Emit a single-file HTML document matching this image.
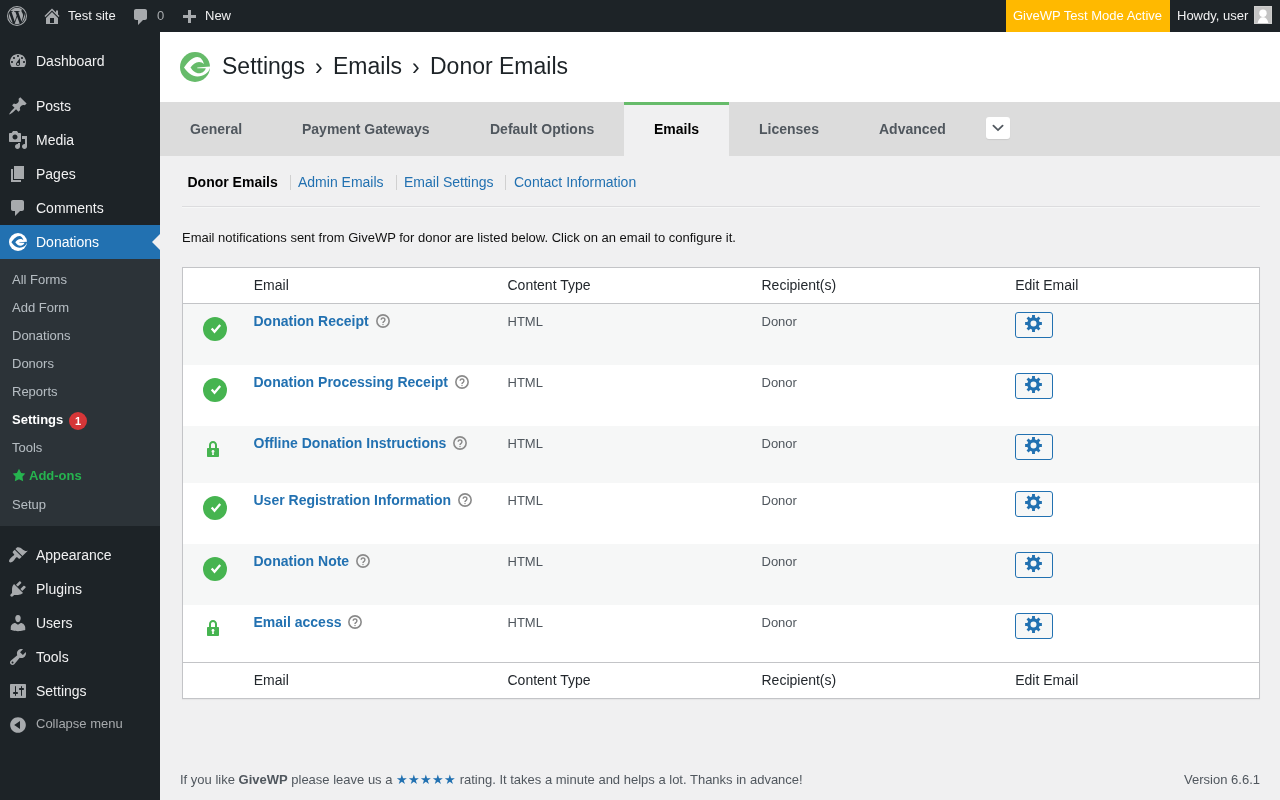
<!DOCTYPE html>
<html><head><meta charset="utf-8">
<style>
*{box-sizing:border-box;margin:0;padding:0}
html,body{width:1280px;height:800px;overflow:hidden}
body{will-change:transform;background:#f0f0f1;font-family:"Liberation Sans",sans-serif;font-size:13px;color:#3c434a;position:relative}
.abs{position:absolute}
.tx{position:absolute;line-height:1;white-space:nowrap}
#adminbar{position:absolute;left:0;top:0;width:1280px;height:32px;background:#1d2327}
#side{position:absolute;left:0;top:32px;width:160px;height:768px;background:#1d2327}
</style></head>
<body>
<div id="adminbar">
<svg class="abs" style="left:7px;top:6px" width="20" height="20" viewBox="0 0 24 24"><defs><clipPath id="wpc"><circle cx="12" cy="12" r="9.8"/></clipPath></defs><circle cx="12" cy="12" r="11.35" fill="none" stroke="#a7aaad" stroke-width="1.3"/><path d="M21.469 6.825c.84 1.537 1.318 3.3 1.318 5.175 0 3.979-2.156 7.456-5.363 9.325l3.295-9.527c.615-1.54.82-2.771.82-3.864 0-.405-.026-.78-.07-1.11m-7.981.105c.647-.03 1.232-.105 1.232-.105.582-.075.514-.93-.067-.899 0 0-1.755.135-2.880.135-1.064 0-2.85-.15-2.85-.15-.585-.03-.661.855-.075.885 0 0 .54.061 1.125.09l1.68 4.605-2.37 7.08L5.354 6.9c.649-.03 1.234-.1 1.234-.1.585-.075.516-.93-.065-.896 0 0-1.746.138-2.874.138-.2 0-.438-.008-.69-.015C4.911 3.15 8.235 1.215 12 1.215c2.809 0 5.365 1.072 7.286 2.833-.046-.003-.091-.009-.141-.009-1.06 0-1.812.923-1.812 1.914 0 .89.513 1.643 1.06 2.531.411.72.89 1.643.89 2.977 0 .915-.354 1.994-.821 3.479l-1.075 3.585-3.9-11.61.001.014zM12 22.784c-1.059 0-2.081-.153-3.048-.437l3.237-9.406 3.315 9.087c.024.053.05.101.078.149-1.12.393-2.325.609-3.582.609M1.211 12c0-1.564.336-3.05.935-4.39L7.290 21.709C3.694 19.960 1.212 16.271 1.211 12" fill="#a7aaad" clip-path="url(#wpc)"/></svg>
<svg class="abs" style="left:42px;top:6px" width="20" height="20" viewBox="0 0 20 20"><path d="M16 8.5l1.53 1.53-1.06 1.06L10 4.62l-6.47 6.47-1.06-1.06L10 2.5l4 4v-2h2v4zm-6-2.46l6 5.99V18H4v-5.97zM12 17v-5H8v5h4z" fill="#a7aaad"/></svg>
<span class="tx" style="left:68px;top:9px;font-size:13px;font-weight:400;color:#f0f0f1;">Test site</span>
<svg class="abs" style="left:131px;top:7px" width="20" height="20" viewBox="0 0 20 20"><path d="M5 2h9c1.1 0 2 .9 2 2v7c0 1.1-.9 2-2 2h-2l-5 5v-5H5c-1.1 0-2-.9-2-2V4c0-1.1.9-2 2-2z" fill="#a7aaad"/></svg>
<span class="tx" style="left:157px;top:9px;font-size:13px;font-weight:400;color:#a7aaad;">0</span>
<svg class="abs" style="left:179px;top:8px" width="20" height="20" viewBox="0 0 20 20"><path d="M17 7v3h-5v5H9v-5H4V7h5V2h3v5h5z" fill="#a7aaad"/></svg>
<span class="tx" style="left:205px;top:9px;font-size:13px;font-weight:400;color:#f0f0f1;">New</span>
<div class="abs" style="left:1006px;top:0;width:164px;height:32px;background:#ffb900"></div>
<span class="tx" style="left:1013px;top:9px;font-size:13px;font-weight:400;color:#fff;">GiveWP Test Mode Active</span>
<span class="tx" style="left:1177px;top:9px;font-size:13px;font-weight:400;color:#f0f0f1;">Howdy, user</span>
<div class="abs" style="left:1254px;top:6px;width:18px;height:18px;background:#c4c4c4;border:1px solid #cdcdcd;overflow:hidden"><svg width="16" height="16" viewBox="0 0 16 16" style="display:block"><circle cx="8" cy="6.2" r="3.7" fill="#fff"/><path d="M2.6 16C3.2 12.4 5.3 10.6 7 10.2L9 10.2C10.7 10.6 12.8 12.4 13.4 16Z" fill="#fff"/></svg></div>
</div>
<div id="side"></div>
<svg class="abs" style="left:8px;top:51px" width="20" height="20" viewBox="0 0 20 20"><path d="M3.76 16h12.48c1.1-1.37 1.76-3.11 1.76-5 0-4.42-3.58-8-8-8s-8 3.58-8 8c0 1.89.66 3.630 1.76 5zM10 4c.55 0 1 .45 1 1s-.45 1-1 1-1-.45-1-1 .45-1 1-1zM6 6c.55 0 1 .45 1 1s-.45 1-1 1-1-.45-1-1 .45-1 1-1zm8 0c.55 0 1 .45 1 1s-.45 1-1 1-1-.45-1-1 .45-1 1-1zm-5.37 5.55L12 7v6c0 1.1-.9 2-2 2s-2-.9-2-2c0-.57.24-1.08.63-1.45zM4 10c.55 0 1 .45 1 1s-.45 1-1 1-1-.45-1-1 .45-1 1-1zm12 0c.55 0 1 .45 1 1s-.45 1-1 1-1-.45-1-1 .45-1 1-1zm-5 3c0-.55-.45-1-1-1s-1 .45-1 1 .45 1 1 1 1-.45 1-1z" fill="#a7aaad"/></svg>
<span class="tx" style="left:36px;top:54px;font-size:14px;font-weight:400;color:#f0f0f1;">Dashboard</span>
<svg class="abs" style="left:8px;top:96px" width="20" height="20" viewBox="0 0 20 20"><path d="M10.44 3.02l1.82-1.82 6.36 6.35-1.83 1.82c-1.05-.68-2.48-.57-3.41.36l-.75.75c-.92.93-1.04 2.35-.35 3.41l-1.83 1.82-2.410-2.41-2.8 2.79c-.42.42-3.38 2.71-3.8 2.29s1.86-3.39 2.28-3.81l2.79-2.79L4.1 9.36l1.83-1.82c1.05.69 2.48.57 3.4-.36l.75-.75c.93-.92 1.05-2.35.36-3.41z" fill="#a7aaad"/></svg>
<span class="tx" style="left:36px;top:99px;font-size:14px;font-weight:400;color:#f0f0f1;">Posts</span>
<svg class="abs" style="left:8px;top:130px" width="20" height="20" viewBox="0 0 20 20"><path d="M13 11V4c0-.55-.45-1-1-1h-1.67L9 1H5L3.67 3H2c-.55 0-1 .45-1 1v7c0 .55.45 1 1 1h10c.55 0 1-.45 1-1zM7 4.5c1.38 0 2.5 1.12 2.5 2.5S8.38 9.5 7 9.5 4.5 8.38 4.5 7 5.62 4.5 7 4.5zM14 6h5v10.5c0 1.38-1.12 2.5-2.5 2.5S14 17.88 14 16.5s1.12-2.5 2.5-2.5c.17 0 .34.02.5.05V9h-3V6zm-4 8.05V13h2v3.5c0 1.38-1.12 2.5-2.5 2.5S7 17.88 7 16.5s1.12-2.5 2.5-2.5c.17 0 .34.02.5.05z" fill="#a7aaad"/></svg>
<span class="tx" style="left:36px;top:133px;font-size:14px;font-weight:400;color:#f0f0f1;">Media</span>
<svg class="abs" style="left:8px;top:164px" width="20" height="20" viewBox="0 0 20 20"><path d="M6 15V2h10v13H6zm-1 1h8v2H3V5h2v11z" fill="#a7aaad"/></svg>
<span class="tx" style="left:36px;top:167px;font-size:14px;font-weight:400;color:#f0f0f1;">Pages</span>
<svg class="abs" style="left:8px;top:198px" width="20" height="20" viewBox="0 0 20 20"><path d="M5 2h9c1.1 0 2 .9 2 2v7c0 1.1-.9 2-2 2h-2l-5 5v-5H5c-1.1 0-2-.9-2-2V4c0-1.1.9-2 2-2z" fill="#a7aaad"/></svg>
<span class="tx" style="left:36px;top:201px;font-size:14px;font-weight:400;color:#f0f0f1;">Comments</span>
<div class="abs" style="left:0;top:225px;width:160px;height:34px;background:#2271b1"></div>
<svg class="abs" style="left:152px;top:234px" width="8" height="16" viewBox="0 0 8 16"><path d="M8 0L0 8L8 16Z" fill="#f0f0f1"/></svg>
<svg class="abs" style="left:9px;top:233px" width="18" height="18" viewBox="0 0 30 30"><circle cx="15" cy="15" r="15" fill="#fff"/><path d="M4 15.5C8 10 12 5.2 17.3 5.1C20.5 5.1 22.8 8 24 11.9C22.5 10.8 21 10 19 10C15.5 10 12.5 12.5 10.5 15.5C12.5 18.5 15.5 21.3 19 21.3C22.5 21.3 25 19 25.8 16.3L17.3 16.2L17.3 15.6L30 14.6L30 16C28.5 21 23.5 24.6 17.3 24.5C12 24.4 8 21 4 15.5Z" fill="#2271b1"/></svg>
<span class="tx" style="left:36px;top:235px;font-size:14px;font-weight:400;color:#fff;">Donations</span>
<div class="abs" style="left:0;top:259px;width:160px;height:267px;background:#2c3338"></div>
<span class="tx" style="left:12px;top:273px;font-size:13px;font-weight:400;color:rgba(240,246,252,.7);">All Forms</span>
<span class="tx" style="left:12px;top:301px;font-size:13px;font-weight:400;color:rgba(240,246,252,.7);">Add Form</span>
<span class="tx" style="left:12px;top:329px;font-size:13px;font-weight:400;color:rgba(240,246,252,.7);">Donations</span>
<span class="tx" style="left:12px;top:357px;font-size:13px;font-weight:400;color:rgba(240,246,252,.7);">Donors</span>
<span class="tx" style="left:12px;top:385px;font-size:13px;font-weight:400;color:rgba(240,246,252,.7);">Reports</span>
<span class="tx" style="left:12px;top:441px;font-size:13px;font-weight:400;color:rgba(240,246,252,.7);">Tools</span>
<span class="tx" style="left:12px;top:498px;font-size:13px;font-weight:400;color:rgba(240,246,252,.7);">Setup</span>
<span class="tx" style="left:12px;top:413px;font-size:13px;font-weight:700;color:#fff;">Settings</span>
<div class="abs" style="left:69px;top:412px;width:18px;height:18px;border-radius:9px;background:#d63638;color:#fff;font-size:11px;font-weight:bold;line-height:18px;text-align:center">1</div>
<svg class="abs" style="left:12px;top:468px" width="14" height="14" viewBox="0 0 20 20"><path d="M10 1l3 6 6 .75-4.12 4.62L16 19l-6-3-6 3 1.13-6.63L1 7.75 7 7z" fill="#26b44f"/></svg>
<span class="tx" style="left:29px;top:469px;font-size:13px;font-weight:700;color:#26b44f;">Add-ons</span>
<svg class="abs" style="left:8px;top:545px" width="20" height="20" viewBox="0 0 20 20"><path d="M14.48 11.06L7.41 3.99l1.5-1.5c.5-.56 2.3-.47 3.51.32 1.21.8 1.43 1.28 2.91 2.1 1.18.64 2.45 1.26 4.45.85zm-.71.71L6.7 4.7 4.93 6.47c-.39.39-.39 1.02 0 1.41l1.06 1.06c.39.39.39 1.03 0 1.42-.6.6-1.43 1.11-2.21 1.69-.35.26-.7.53-1.01.84C1.43 14.23.4 16.08 1.4 17.07c.99 1 2.84-.03 4.18-1.36.31-.31.58-.66.85-1.02.57-.78 1.08-1.61 1.69-2.21.39-.39 1.02-.39 1.41 0l1.06 1.06c.39.39 1.02.39 1.41 0z" fill="#a7aaad"/></svg>
<span class="tx" style="left:36px;top:548px;font-size:14px;font-weight:400;color:#f0f0f1;">Appearance</span>
<svg class="abs" style="left:8px;top:579px" width="20" height="20" viewBox="0 0 20 20"><path d="M13.11 4.36L9.87 7.6 8 5.73l3.24-3.24c.35-.34 1.050-.2 1.56.32.52.51.66 1.21.31 1.55zm-8 1.77l.91-1.12 9.01 9.01-1.19.84c-.71.71-2.63 1.16-3.82 1.16H6.14L4.9 17.26c-.59.59-1.54.59-2.12 0-.59-.58-.59-1.53 0-2.12l1.24-1.24v-3.88c0-1.13.4-3.19 1.09-3.89zm7.26 3.97l3.24-3.24c.34-.35 1.04-.21 1.55.31.52.51.66 1.21.31 1.55l-3.24 3.25z" fill="#a7aaad"/></svg>
<span class="tx" style="left:36px;top:582px;font-size:14px;font-weight:400;color:#f0f0f1;">Plugins</span>
<svg class="abs" style="left:8px;top:613px" width="20" height="20" viewBox="0 0 20 20"><path d="M10 9.25c-2.27 0-2.73-3.44-2.73-3.44C7 4.02 7.82 2 9.97 2c2.16 0 2.98 2.02 2.71 3.81 0 0-.41 3.44-2.68 3.44zm0 2.57L12.72 10c2.39 0 4.52 2.33 4.52 4.53v2.49s-3.65 1.13-7.24 1.13c-3.65 0-7.24-1.13-7.24-1.13v-2.49c0-2.25 1.94-4.48 4.47-4.48z" fill="#a7aaad"/></svg>
<span class="tx" style="left:36px;top:616px;font-size:14px;font-weight:400;color:#f0f0f1;">Users</span>
<svg class="abs" style="left:8px;top:647px" width="20" height="20" viewBox="0 0 20 20"><path d="M16.68 9.77c-1.34 1.34-3.3 1.67-4.95.99l-5.41 6.52c-.99.99-2.59.99-3.58 0s-.99-2.59 0-3.57l6.52-5.42c-.68-1.65-.35-3.61.99-4.95 1.28-1.28 3.12-1.62 4.72-1.06l-2.89 2.89 2.82 2.82 2.86-2.87c.53 1.58.18 3.39-1.08 4.65zM3.81 16.21c.4.39 1.04.39 1.43 0 .4-.4.4-1.04 0-1.43-.39-.4-1.03-.4-1.43 0-.39.39-.39 1.03 0 1.43z" fill="#a7aaad"/></svg>
<span class="tx" style="left:36px;top:650px;font-size:14px;font-weight:400;color:#f0f0f1;">Tools</span>
<svg class="abs" style="left:8px;top:681px" width="20" height="20" viewBox="0 0 20 20"><path d="M18 16V4c0-.55-.45-1-1-1H3c-.55 0-1 .45-1 1v12c0 .55.45 1 1 1h14c.55 0 1-.45 1-1zM8 11h1c.55 0 1 .45 1 1s-.45 1-1 1H8v1.5c0 .28-.22.5-.5.5s-.5-.22-.5-.5V13H6c-.55 0-1-.45-1-1s.45-1 1-1h1V5.5c0-.28.22-.5.5-.5s.5.22.5.5V11zm5-2h-1c-.55 0-1-.45-1-1s.45-1 1-1h1V5.5c0-.28.22-.5.5-.5s.5.22.5.5V7h1c.55 0 1 .45 1 1s-.45 1-1 1h-1v5.5c0 .28-.22.5-.5.5s-.5-.22-.5-.5V9z" fill="#a7aaad"/></svg>
<span class="tx" style="left:36px;top:684px;font-size:14px;font-weight:400;color:#f0f0f1;">Settings</span>
<svg class="abs" style="left:8px;top:715px" width="20" height="20" viewBox="0 0 20 20"><path d="M10 2.16c4.33 0 7.840 3.51 7.84 7.84S14.33 17.84 10 17.84 2.16 14.33 2.16 10 5.71 2.16 10 2.16zm2 11.72V6.12L6.18 9.97z" fill="#a7aaad"/></svg>
<span class="tx" style="left:36px;top:717px;font-size:13px;font-weight:400;color:#a7aaad;">Collapse menu</span>
<div class="abs" style="left:160px;top:32px;width:1120px;height:70px;background:#fff"></div>
<svg class="abs" style="left:180px;top:52px" width="30" height="30" viewBox="0 0 30 30"><circle cx="15" cy="15" r="15" fill="#66bb6a"/><path d="M4 15.5C8 10 12 5.2 17.3 5.1C20.5 5.1 22.8 8 24 11.9C22.5 10.8 21 10 19 10C15.5 10 12.5 12.5 10.5 15.5C12.5 18.5 15.5 21.3 19 21.3C22.5 21.3 25 19 25.8 16.3L17.3 16.2L17.3 15.6L30 14.6L30 16C28.5 21 23.5 24.6 17.3 24.5C12 24.4 8 21 4 15.5Z" fill="#fff"/></svg>
<span class="tx" style="left:222px;top:55px;font-size:23px;font-weight:400;color:#1d2327;">Settings</span>
<span class="tx" style="left:315px;top:56px;font-size:23px;font-weight:400;color:#1d2327;">›</span>
<span class="tx" style="left:333px;top:55px;font-size:23px;font-weight:400;color:#1d2327;">Emails</span>
<span class="tx" style="left:412px;top:56px;font-size:23px;font-weight:400;color:#1d2327;">›</span>
<span class="tx" style="left:430px;top:55px;font-size:23px;font-weight:400;color:#1d2327;">Donor Emails</span>
<div class="abs" style="left:160px;top:102px;width:1120px;height:54px;background:#dcdcdc"></div>
<div class="abs" style="left:624px;top:102px;width:105px;height:54px;background:#f0f0f1;border-top:3px solid #66bb6a"></div>
<span class="tx" style="left:190px;top:122px;font-size:14px;font-weight:700;color:#50575e;">General</span>
<span class="tx" style="left:302px;top:122px;font-size:14px;font-weight:700;color:#50575e;">Payment Gateways</span>
<span class="tx" style="left:490px;top:122px;font-size:14px;font-weight:700;color:#50575e;">Default Options</span>
<span class="tx" style="left:759px;top:122px;font-size:14px;font-weight:700;color:#50575e;">Licenses</span>
<span class="tx" style="left:879px;top:122px;font-size:14px;font-weight:700;color:#50575e;">Advanced</span>
<span class="tx" style="left:654px;top:122px;font-size:14px;font-weight:700;color:#000;">Emails</span>
<div class="abs" style="left:986px;top:117px;width:24px;height:22px;background:#fff;border-radius:3px;box-shadow:0 1px 1px rgba(0,0,0,.08)"><svg width="24" height="22" viewBox="0 0 24 22" style="display:block"><path d="M7.4 8.7L12 13.1L16.6 8.7" fill="none" stroke="#50575e" stroke-width="1.8" stroke-linecap="round"/></svg></div>
<span class="tx" style="left:187.5px;top:175px;font-size:14px;font-weight:700;color:#000;">Donor Emails</span>
<span class="tx" style="left:298px;top:175px;font-size:14px;font-weight:400;color:#2271b1;">Admin Emails</span>
<span class="tx" style="left:404px;top:175px;font-size:14px;font-weight:400;color:#2271b1;">Email Settings</span>
<span class="tx" style="left:514px;top:175px;font-size:14px;font-weight:400;color:#2271b1;">Contact Information</span>
<div class="abs" style="left:290px;top:175px;width:1px;height:15px;background:#d0d0d0"></div>
<div class="abs" style="left:396px;top:175px;width:1px;height:15px;background:#d0d0d0"></div>
<div class="abs" style="left:505px;top:175px;width:1px;height:15px;background:#d0d0d0"></div>
<div class="abs" style="left:182px;top:206px;width:1078px;height:1px;background:#dcdcde"></div>
<div class="abs" style="left:182px;top:207px;width:1078px;height:1px;background:#f6f7f7"></div>
<span class="tx" style="left:182px;top:231px;font-size:13px;font-weight:400;color:#111;">Email notifications sent from GiveWP for donor are listed below. Click on an email to configure it.</span>
<div class="abs" style="left:182px;top:267px;width:1078px;height:432px;background:#fff;border:1px solid #c3c4c7;box-shadow:0 1px 1px rgba(0,0,0,.04)"></div>
<div class="abs" style="left:183px;top:303px;width:1076px;height:1px;background:#c3c4c7"></div>
<div class="abs" style="left:183px;top:662px;width:1076px;height:1px;background:#c3c4c7"></div>
<span class="tx" style="left:253.75px;top:278px;font-size:14px;font-weight:400;color:#23282d;">Email</span>
<span class="tx" style="left:507.5px;top:278px;font-size:14px;font-weight:400;color:#23282d;">Content Type</span>
<span class="tx" style="left:761.5px;top:278px;font-size:14px;font-weight:400;color:#23282d;">Recipient(s)</span>
<span class="tx" style="left:1015.25px;top:278px;font-size:14px;font-weight:400;color:#23282d;">Edit Email</span>
<span class="tx" style="left:253.75px;top:673px;font-size:14px;font-weight:400;color:#23282d;">Email</span>
<span class="tx" style="left:507.5px;top:673px;font-size:14px;font-weight:400;color:#23282d;">Content Type</span>
<span class="tx" style="left:761.5px;top:673px;font-size:14px;font-weight:400;color:#23282d;">Recipient(s)</span>
<span class="tx" style="left:1015.25px;top:673px;font-size:14px;font-weight:400;color:#23282d;">Edit Email</span>
<div class="abs" style="left:183px;top:304px;width:1076px;height:61px;background:#f6f7f7"></div>
<svg class="abs" style="left:203px;top:317px" width="24" height="24" viewBox="0 0 24 24"><circle cx="12" cy="12" r="12" fill="#46b450"/><path d="M8.7 11.6L11.5 14.8L17.2 7.9" fill="none" stroke="#fff" stroke-width="2.3"/></svg>
<span class="tx" style="left:253.5px;top:314px;font-size:14px;font-weight:700;color:#2271b1">Donation Receipt<svg style="display:inline-block;vertical-align:top;margin-left:7px;margin-top:0" width="14" height="14" viewBox="0 0 14 14"><circle cx="7" cy="7" r="6.15" fill="none" stroke="#8a8a8a" stroke-width="1.6"/><path d="M5.2 5.8A1.85 1.85 0 1 1 8.1 7.3Q7 7.9 7 9" fill="none" stroke="#8a8a8a" stroke-width="1.5"/><circle cx="7" cy="10.5" r=".7" fill="#8a8a8a"/></svg></span>
<span class="tx" style="left:507.5px;top:315px;font-size:13px;font-weight:400;color:#50575e;">HTML</span>
<span class="tx" style="left:761.5px;top:315px;font-size:13px;font-weight:400;color:#50575e;">Donor</span>
<div class="abs" style="left:1015px;top:312px;width:38px;height:26px;border:1px solid #2271b1;border-radius:3px;background:#f6f7f7"></div>
<svg class="abs" style="left:1025px;top:315px" width="17" height="17" viewBox="0 0 17 17"><path d="M7.05 2.47L7.05 0.12L9.95 0.12L9.95 2.47A6.20 6.20 0 0 1 11.74 3.21L11.74 3.21L13.40 1.55L15.45 3.60L13.79 5.26A6.20 6.20 0 0 1 14.53 7.05L14.53 7.05L16.88 7.05L16.88 9.95L14.53 9.95A6.20 6.20 0 0 1 13.79 11.74L13.79 11.74L15.45 13.40L13.40 15.45L11.74 13.79A6.20 6.20 0 0 1 9.95 14.53L9.95 14.53L9.95 16.88L7.05 16.88L7.05 14.53A6.20 6.20 0 0 1 5.26 13.79L5.26 13.79L3.60 15.45L1.55 13.40L3.21 11.74A6.20 6.20 0 0 1 2.47 9.95L2.47 9.95L0.12 9.95L0.12 7.05L2.47 7.05A6.20 6.20 0 0 1 3.21 5.26L3.21 5.26L1.55 3.60L3.60 1.55L5.26 3.21A6.20 6.20 0 0 1 7.05 2.47ZM5.50 8.50A3.00 3.00 0 1 0 11.50 8.50A3.00 3.00 0 1 0 5.50 8.50Z" fill="#2271b1" fill-rule="evenodd"/></svg>
<svg class="abs" style="left:203px;top:378px" width="24" height="24" viewBox="0 0 24 24"><circle cx="12" cy="12" r="12" fill="#46b450"/><path d="M8.7 11.6L11.5 14.8L17.2 7.9" fill="none" stroke="#fff" stroke-width="2.3"/></svg>
<span class="tx" style="left:253.5px;top:375px;font-size:14px;font-weight:700;color:#2271b1">Donation Processing Receipt<svg style="display:inline-block;vertical-align:top;margin-left:7px;margin-top:0" width="14" height="14" viewBox="0 0 14 14"><circle cx="7" cy="7" r="6.15" fill="none" stroke="#8a8a8a" stroke-width="1.6"/><path d="M5.2 5.8A1.85 1.85 0 1 1 8.1 7.3Q7 7.9 7 9" fill="none" stroke="#8a8a8a" stroke-width="1.5"/><circle cx="7" cy="10.5" r=".7" fill="#8a8a8a"/></svg></span>
<span class="tx" style="left:507.5px;top:376px;font-size:13px;font-weight:400;color:#50575e;">HTML</span>
<span class="tx" style="left:761.5px;top:376px;font-size:13px;font-weight:400;color:#50575e;">Donor</span>
<div class="abs" style="left:1015px;top:373px;width:38px;height:26px;border:1px solid #2271b1;border-radius:3px;background:#f6f7f7"></div>
<svg class="abs" style="left:1025px;top:376px" width="17" height="17" viewBox="0 0 17 17"><path d="M7.05 2.47L7.05 0.12L9.95 0.12L9.95 2.47A6.20 6.20 0 0 1 11.74 3.21L11.74 3.21L13.40 1.55L15.45 3.60L13.79 5.26A6.20 6.20 0 0 1 14.53 7.05L14.53 7.05L16.88 7.05L16.88 9.95L14.53 9.95A6.20 6.20 0 0 1 13.79 11.74L13.79 11.74L15.45 13.40L13.40 15.45L11.74 13.79A6.20 6.20 0 0 1 9.95 14.53L9.95 14.53L9.95 16.88L7.05 16.88L7.05 14.53A6.20 6.20 0 0 1 5.26 13.79L5.26 13.79L3.60 15.45L1.55 13.40L3.21 11.74A6.20 6.20 0 0 1 2.47 9.95L2.47 9.95L0.12 9.95L0.12 7.05L2.47 7.05A6.20 6.20 0 0 1 3.21 5.26L3.21 5.26L1.55 3.60L3.60 1.55L5.26 3.21A6.20 6.20 0 0 1 7.05 2.47ZM5.50 8.50A3.00 3.00 0 1 0 11.50 8.50A3.00 3.00 0 1 0 5.50 8.50Z" fill="#2271b1" fill-rule="evenodd"/></svg>
<div class="abs" style="left:183px;top:426px;width:1076px;height:57px;background:#f6f7f7"></div>
<svg class="abs" style="left:203px;top:439px" width="20" height="20" viewBox="0 0 20 20"><path d="M14 9h1c.55 0 1 .45 1 1v7c0 .55-.45 1-1 1H5c-.55 0-1-.45-1-1v-7c0-.55.45-1 1-1h1V6c0-2.2 1.8-4 4-4s4 1.8 4 4v3zm-2 0V6c0-1.1-.9-2-2-2s-2 .9-2 2v3h4zm-1 7l-.36-2.15c.51-.24.86-.75.86-1.35 0-.83-.67-1.5-1.5-1.5s-1.5.67-1.5 1.5c0 .6.35 1.11.86 1.35L9 16h2z" fill="#46b450"/></svg>
<span class="tx" style="left:253.5px;top:436px;font-size:14px;font-weight:700;color:#2271b1">Offline Donation Instructions<svg style="display:inline-block;vertical-align:top;margin-left:7px;margin-top:0" width="14" height="14" viewBox="0 0 14 14"><circle cx="7" cy="7" r="6.15" fill="none" stroke="#8a8a8a" stroke-width="1.6"/><path d="M5.2 5.8A1.85 1.85 0 1 1 8.1 7.3Q7 7.9 7 9" fill="none" stroke="#8a8a8a" stroke-width="1.5"/><circle cx="7" cy="10.5" r=".7" fill="#8a8a8a"/></svg></span>
<span class="tx" style="left:507.5px;top:437px;font-size:13px;font-weight:400;color:#50575e;">HTML</span>
<span class="tx" style="left:761.5px;top:437px;font-size:13px;font-weight:400;color:#50575e;">Donor</span>
<div class="abs" style="left:1015px;top:434px;width:38px;height:26px;border:1px solid #2271b1;border-radius:3px;background:#f6f7f7"></div>
<svg class="abs" style="left:1025px;top:437px" width="17" height="17" viewBox="0 0 17 17"><path d="M7.05 2.47L7.05 0.12L9.95 0.12L9.95 2.47A6.20 6.20 0 0 1 11.74 3.21L11.74 3.21L13.40 1.55L15.45 3.60L13.79 5.26A6.20 6.20 0 0 1 14.53 7.05L14.53 7.05L16.88 7.05L16.88 9.95L14.53 9.95A6.20 6.20 0 0 1 13.79 11.74L13.79 11.74L15.45 13.40L13.40 15.45L11.74 13.79A6.20 6.20 0 0 1 9.95 14.53L9.95 14.53L9.95 16.88L7.05 16.88L7.05 14.53A6.20 6.20 0 0 1 5.26 13.79L5.26 13.79L3.60 15.45L1.55 13.40L3.21 11.74A6.20 6.20 0 0 1 2.47 9.95L2.47 9.95L0.12 9.95L0.12 7.05L2.47 7.05A6.20 6.20 0 0 1 3.21 5.26L3.21 5.26L1.55 3.60L3.60 1.55L5.26 3.21A6.20 6.20 0 0 1 7.05 2.47ZM5.50 8.50A3.00 3.00 0 1 0 11.50 8.50A3.00 3.00 0 1 0 5.50 8.50Z" fill="#2271b1" fill-rule="evenodd"/></svg>
<svg class="abs" style="left:203px;top:496px" width="24" height="24" viewBox="0 0 24 24"><circle cx="12" cy="12" r="12" fill="#46b450"/><path d="M8.7 11.6L11.5 14.8L17.2 7.9" fill="none" stroke="#fff" stroke-width="2.3"/></svg>
<span class="tx" style="left:253.5px;top:493px;font-size:14px;font-weight:700;color:#2271b1">User Registration Information<svg style="display:inline-block;vertical-align:top;margin-left:7px;margin-top:0" width="14" height="14" viewBox="0 0 14 14"><circle cx="7" cy="7" r="6.15" fill="none" stroke="#8a8a8a" stroke-width="1.6"/><path d="M5.2 5.8A1.85 1.85 0 1 1 8.1 7.3Q7 7.9 7 9" fill="none" stroke="#8a8a8a" stroke-width="1.5"/><circle cx="7" cy="10.5" r=".7" fill="#8a8a8a"/></svg></span>
<span class="tx" style="left:507.5px;top:494px;font-size:13px;font-weight:400;color:#50575e;">HTML</span>
<span class="tx" style="left:761.5px;top:494px;font-size:13px;font-weight:400;color:#50575e;">Donor</span>
<div class="abs" style="left:1015px;top:491px;width:38px;height:26px;border:1px solid #2271b1;border-radius:3px;background:#f6f7f7"></div>
<svg class="abs" style="left:1025px;top:494px" width="17" height="17" viewBox="0 0 17 17"><path d="M7.05 2.47L7.05 0.12L9.95 0.12L9.95 2.47A6.20 6.20 0 0 1 11.74 3.21L11.74 3.21L13.40 1.55L15.45 3.60L13.79 5.26A6.20 6.20 0 0 1 14.53 7.05L14.53 7.05L16.88 7.05L16.88 9.95L14.53 9.95A6.20 6.20 0 0 1 13.79 11.74L13.79 11.74L15.45 13.40L13.40 15.45L11.74 13.79A6.20 6.20 0 0 1 9.95 14.53L9.95 14.53L9.95 16.88L7.05 16.88L7.05 14.53A6.20 6.20 0 0 1 5.26 13.79L5.26 13.79L3.60 15.45L1.55 13.40L3.21 11.74A6.20 6.20 0 0 1 2.47 9.95L2.47 9.95L0.12 9.95L0.12 7.05L2.47 7.05A6.20 6.20 0 0 1 3.21 5.26L3.21 5.26L1.55 3.60L3.60 1.55L5.26 3.21A6.20 6.20 0 0 1 7.05 2.47ZM5.50 8.50A3.00 3.00 0 1 0 11.50 8.50A3.00 3.00 0 1 0 5.50 8.50Z" fill="#2271b1" fill-rule="evenodd"/></svg>
<div class="abs" style="left:183px;top:544px;width:1076px;height:61px;background:#f6f7f7"></div>
<svg class="abs" style="left:203px;top:557px" width="24" height="24" viewBox="0 0 24 24"><circle cx="12" cy="12" r="12" fill="#46b450"/><path d="M8.7 11.6L11.5 14.8L17.2 7.9" fill="none" stroke="#fff" stroke-width="2.3"/></svg>
<span class="tx" style="left:253.5px;top:554px;font-size:14px;font-weight:700;color:#2271b1">Donation Note<svg style="display:inline-block;vertical-align:top;margin-left:7px;margin-top:0" width="14" height="14" viewBox="0 0 14 14"><circle cx="7" cy="7" r="6.15" fill="none" stroke="#8a8a8a" stroke-width="1.6"/><path d="M5.2 5.8A1.85 1.85 0 1 1 8.1 7.3Q7 7.9 7 9" fill="none" stroke="#8a8a8a" stroke-width="1.5"/><circle cx="7" cy="10.5" r=".7" fill="#8a8a8a"/></svg></span>
<span class="tx" style="left:507.5px;top:555px;font-size:13px;font-weight:400;color:#50575e;">HTML</span>
<span class="tx" style="left:761.5px;top:555px;font-size:13px;font-weight:400;color:#50575e;">Donor</span>
<div class="abs" style="left:1015px;top:552px;width:38px;height:26px;border:1px solid #2271b1;border-radius:3px;background:#f6f7f7"></div>
<svg class="abs" style="left:1025px;top:555px" width="17" height="17" viewBox="0 0 17 17"><path d="M7.05 2.47L7.05 0.12L9.95 0.12L9.95 2.47A6.20 6.20 0 0 1 11.74 3.21L11.74 3.21L13.40 1.55L15.45 3.60L13.79 5.26A6.20 6.20 0 0 1 14.53 7.05L14.53 7.05L16.88 7.05L16.88 9.95L14.53 9.95A6.20 6.20 0 0 1 13.79 11.74L13.79 11.74L15.45 13.40L13.40 15.45L11.74 13.79A6.20 6.20 0 0 1 9.95 14.53L9.95 14.53L9.95 16.88L7.05 16.88L7.05 14.53A6.20 6.20 0 0 1 5.26 13.79L5.26 13.79L3.60 15.45L1.55 13.40L3.21 11.74A6.20 6.20 0 0 1 2.47 9.95L2.47 9.95L0.12 9.95L0.12 7.05L2.47 7.05A6.20 6.20 0 0 1 3.21 5.26L3.21 5.26L1.55 3.60L3.60 1.55L5.26 3.21A6.20 6.20 0 0 1 7.05 2.47ZM5.50 8.50A3.00 3.00 0 1 0 11.50 8.50A3.00 3.00 0 1 0 5.50 8.50Z" fill="#2271b1" fill-rule="evenodd"/></svg>
<svg class="abs" style="left:203px;top:618px" width="20" height="20" viewBox="0 0 20 20"><path d="M14 9h1c.55 0 1 .45 1 1v7c0 .55-.45 1-1 1H5c-.55 0-1-.45-1-1v-7c0-.55.45-1 1-1h1V6c0-2.2 1.8-4 4-4s4 1.8 4 4v3zm-2 0V6c0-1.1-.9-2-2-2s-2 .9-2 2v3h4zm-1 7l-.36-2.15c.51-.24.86-.75.86-1.35 0-.83-.67-1.5-1.5-1.5s-1.5.67-1.5 1.5c0 .6.35 1.11.86 1.35L9 16h2z" fill="#46b450"/></svg>
<span class="tx" style="left:253.5px;top:615px;font-size:14px;font-weight:700;color:#2271b1">Email access<svg style="display:inline-block;vertical-align:top;margin-left:7px;margin-top:0" width="14" height="14" viewBox="0 0 14 14"><circle cx="7" cy="7" r="6.15" fill="none" stroke="#8a8a8a" stroke-width="1.6"/><path d="M5.2 5.8A1.85 1.85 0 1 1 8.1 7.3Q7 7.9 7 9" fill="none" stroke="#8a8a8a" stroke-width="1.5"/><circle cx="7" cy="10.5" r=".7" fill="#8a8a8a"/></svg></span>
<span class="tx" style="left:507.5px;top:616px;font-size:13px;font-weight:400;color:#50575e;">HTML</span>
<span class="tx" style="left:761.5px;top:616px;font-size:13px;font-weight:400;color:#50575e;">Donor</span>
<div class="abs" style="left:1015px;top:613px;width:38px;height:26px;border:1px solid #2271b1;border-radius:3px;background:#f6f7f7"></div>
<svg class="abs" style="left:1025px;top:616px" width="17" height="17" viewBox="0 0 17 17"><path d="M7.05 2.47L7.05 0.12L9.95 0.12L9.95 2.47A6.20 6.20 0 0 1 11.74 3.21L11.74 3.21L13.40 1.55L15.45 3.60L13.79 5.26A6.20 6.20 0 0 1 14.53 7.05L14.53 7.05L16.88 7.05L16.88 9.95L14.53 9.95A6.20 6.20 0 0 1 13.79 11.74L13.79 11.74L15.45 13.40L13.40 15.45L11.74 13.79A6.20 6.20 0 0 1 9.95 14.53L9.95 14.53L9.95 16.88L7.05 16.88L7.05 14.53A6.20 6.20 0 0 1 5.26 13.79L5.26 13.79L3.60 15.45L1.55 13.40L3.21 11.74A6.20 6.20 0 0 1 2.47 9.95L2.47 9.95L0.12 9.95L0.12 7.05L2.47 7.05A6.20 6.20 0 0 1 3.21 5.26L3.21 5.26L1.55 3.60L3.60 1.55L5.26 3.21A6.20 6.20 0 0 1 7.05 2.47ZM5.50 8.50A3.00 3.00 0 1 0 11.50 8.50A3.00 3.00 0 1 0 5.50 8.50Z" fill="#2271b1" fill-rule="evenodd"/></svg>
<span class="tx" style="left:180px;top:773px;font-size:13px;color:#50575e">If you like <b>GiveWP</b> please leave us a <span style="color:#2271b1">★★★★★</span> rating. It takes a minute and helps a lot. Thanks in advance!</span>
<span class="tx" style="right:20px;top:773px;font-size:13px;color:#50575e">Version 6.6.1</span>
</body></html>
